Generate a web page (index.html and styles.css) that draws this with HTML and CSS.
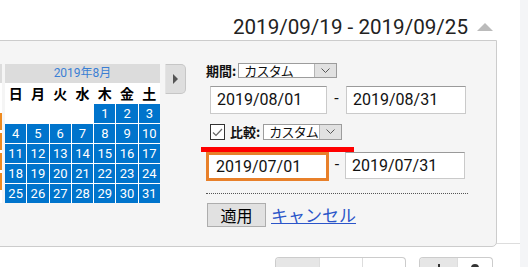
FILE: index.html
```html
<!DOCTYPE html>
<html lang="ja">
<head>
  <meta charset="UTF-8">
  <title>期間の選択</title>
  <link rel="stylesheet" href="styles.css">
</head>
<body>
  <div class="page">
    <div class="main">
      <div class="range-title">
        <span>2019/09/19 - 2019/09/25</span>
        <span class="caret-up"></span>
      </div>
      <div class="content"></div>

      <div class="toolbar">
        <div class="seg-group">
          <span class="seg active wide"></span>
          <span class="seg wide"></span>
          <span class="seg wide"></span>
        </div>
        <div class="seg-group">
          <span class="seg active icon-seg">
            <svg width="14" height="14" viewBox="0 0 14 14"><path d="M7 1v8M3.5 6L7 9.5 10.5 6M2 12h10" fill="none" stroke="#333" stroke-width="2"/></svg>
          </span>
          <span class="seg icon-seg narrow">
            <svg width="14" height="14" viewBox="0 0 14 14"><circle cx="7" cy="5" r="4" fill="#333"/></svg>
          </span>
        </div>
      </div>

      <div class="picker">
        <div class="cal-clip">
          <div class="cal" id="cal-prev"></div>
        </div>
        <div class="cal" id="cal-current"></div>
        <button class="next-month" aria-label="次の月"></button>

        <div class="form">
          <div class="row period">
            <span class="label">期間:</span>
            <div class="combo combo-period">
              <span class="combo-text">カスタム</span>
              <span class="combo-arrow"><svg width="9" height="5" viewBox="0 0 9 5"><path d="M0.5 0.5l4 4 4-4" fill="none" stroke="#555"/></svg></span>
            </div>
          </div>

          <div class="row dates">
            <div class="date first">2019/08/01</div>
            <span class="dash">-</span>
            <div class="date">2019/08/31</div>
          </div>

          <div class="row compare">
            <span class="checkbox"><svg width="13" height="14" viewBox="0 0 13 14"><path d="M2 7.5l3 3 6-6.5" fill="none" stroke="#666" stroke-width="1.2"/></svg></span>
            <span class="label">比較:</span>
            <div class="combo combo-compare">
              <span class="combo-text">カスタム</span>
              <span class="combo-arrow"><svg width="9" height="5" viewBox="0 0 9 5"><path d="M0.5 0.5l4 4 4-4" fill="none" stroke="#555"/></svg></span>
            </div>
          </div>

          <div class="mark-line"></div>

          <div class="row dates compare-dates">
            <div class="date highlight">2019/07/01</div>
            <span class="dash">-</span>
            <div class="date">2019/07/31</div>
          </div>

          <div class="separator"></div>

          <div class="row actions">
            <button class="apply">適用</button>
            <a href="#" class="cancel">キャンセル</a>
          </div>
        </div>
      </div>
    </div>
    <div class="side"></div>
  </div>

  <script>
    const dayNames = ['日', '月', '火', '水', '木', '金', '土'];

    function buildMonth(el, year, month, dayClass) {
      const head = document.createElement('div');
      head.className = 'cal-head';
      head.textContent = year + '年' + month + '月';
      el.appendChild(head);

      const grid = document.createElement('div');
      grid.className = 'cal-grid';

      dayNames.forEach(name => {
        const cell = document.createElement('span');
        cell.className = 'dow';
        cell.textContent = name;
        grid.appendChild(cell);
      });

      const first = new Date(year, month - 1, 1).getDay();
      const days = new Date(year, month, 0).getDate();

      for (let i = 0; i < first; i++) {
        grid.appendChild(document.createElement('span'));
      }
      for (let d = 1; d <= days; d++) {
        const cell = document.createElement('span');
        cell.className = 'day ' + dayClass;
        cell.textContent = d;
        grid.appendChild(cell);
      }
      while (grid.children.length < 42) {
        grid.appendChild(document.createElement('span'));
      }

      el.appendChild(grid);
    }

    buildMonth(document.getElementById('cal-prev'), 2019, 7, 'compare');
    buildMonth(document.getElementById('cal-current'), 2019, 8, 'selected');
  </script>
</body>
</html>
```

FILE: styles.css
```css
body {
  margin: 0;
  background-color: #fff;
  overflow: hidden;
  font-family: Roboto, "Noto Sans CJK JP", sans-serif;
  color: #111;
}

.page {
  display: flex;
  height: 267px;
  overflow: hidden;
}

.main {
  width: 520px;
  position: relative;
}

.side {
  flex: 1;
  background-color: #f4f5f7;
}

.range-title {
  height: 40px;
  box-sizing: border-box;
  padding: 15px 27px 0 0;
  display: flex;
  justify-content: flex-end;
  align-items: flex-start;
  font-size: 20.6px;
  line-height: 25px;
  color: #222;
}

.caret-up {
  margin: 8px 0 0 9px;
  border-left: 8px solid transparent;
  border-right: 8px solid transparent;
  border-bottom: 8px solid #bbb;
}

.content {
  height: 203px;
  border-bottom: 1px solid #ddd;
}

/* toolbar under the panel, only its top shows */
.toolbar {
  display: flex;
  justify-content: flex-end;
  gap: 13px;
  padding-right: 27px;
  margin-top: 13px;
}

.seg-group {
  display: flex;
  height: 10px;
  border: 1px solid #ccc;
  border-bottom: none;
  border-radius: 4px 4px 0 0;
  overflow: hidden;
  background-color: #fff;
}

.seg {
  display: flex;
  justify-content: center;
  padding-top: 5px;
  box-sizing: border-box;
  border-left: 1px solid #ddd;
}

.seg:first-child {
  border-left: none;
}

.seg.wide {
  width: 43px;
}

.seg.icon-seg {
  width: 37px;
}

.seg.narrow {
  width: 35px;
}

.seg.active {
  background-color: #e6e6e6;
}

/* date range dropdown */
.picker {
  position: absolute;
  top: 40px;
  left: -10px;
  right: 23px;
  height: 207px;
  box-sizing: border-box;
  background-color: #f5f5f5;
  border: 1px solid #ccc;
  border-radius: 0 0 5px 0;
  padding: 23px 0 0 9px;
  display: flex;
  align-items: flex-start;
}

.cal-clip {
  width: 2px;
  overflow: hidden;
  display: flex;
  justify-content: flex-end;
  margin-right: 3px;
}

.cal {
  width: 155px;
  flex-shrink: 0;
  background-color: #fff;
}

.cal-head {
  height: 19px;
  line-height: 19px;
  margin-bottom: 1px;
  background-color: #dcdcdc;
  color: #3b7fd4;
  text-align: center;
  font-size: 12px;
}

.cal-grid {
  display: grid;
  grid-template-columns: repeat(7, 1fr);
  grid-auto-rows: 19px;
  gap: 1px;
}

.cal-grid span {
  text-align: center;
  line-height: 19px;
  font-size: 13px;
}

.cal-grid .dow {
  font-family: "Noto Sans CJK JP", sans-serif;
  font-weight: bold;
  font-size: 14px;
  color: #000;
}

.day.selected {
  background-color: #0074cc;
  color: #fff;
}

.day.compare {
  background-color: #ef8a1f;
  color: #fff;
}

.next-month {
  width: 21px;
  height: 30px;
  margin-left: 5px;
  padding: 0;
  flex-shrink: 0;
  border: 1px solid #c6c6c6;
  border-left-color: #e4e4e4;
  border-radius: 0 5px 5px 0;
  background-color: #dedede;
  display: flex;
  align-items: center;
  justify-content: center;
}

.next-month::before {
  content: "";
  border-left: 5px solid #555;
  border-top: 5px solid transparent;
  border-bottom: 5px solid transparent;
}

.form {
  margin: -1px 0 0 20px;
  width: 262px;
  font-family: "Noto Sans CJK JP", sans-serif;
}

.row {
  display: flex;
  align-items: center;
}

.label {
  font-weight: bold;
  font-size: 13px;
  line-height: 15px;
  color: #111;
  white-space: nowrap;
}

.combo {
  display: flex;
  box-sizing: border-box;
  border: 1px solid #9c9c9c;
  background-color: #fff;
  font-size: 13px;
  letter-spacing: -0.8px;
  white-space: nowrap;
}

.combo-period {
  width: 99px;
  height: 15px;
  margin-left: 2px;
}

.combo-compare {
  width: 79px;
  height: 16px;
  margin-left: 3px;
}

.combo-text {
  flex: 1;
  padding-left: 5px;
  line-height: 13px;
}

.combo-compare .combo-text {
  line-height: 14px;
}

.combo-arrow {
  width: 21px;
  flex-shrink: 0;
  background-color: #e1e1e1;
  border-left: 1px solid #b5b5b5;
  display: flex;
  align-items: center;
  justify-content: center;
}

.dates {
  margin-top: 8px;
  align-items: flex-start;
}

.date {
  box-sizing: border-box;
  width: 120px;
  height: 28px;
  border: 1px solid #cacaca;
  border-top-color: #9a9a9a;
  background-color: #fff;
  padding-left: 6px;
  font-family: Roboto, sans-serif;
  font-size: 16px;
  line-height: 26px;
  color: #111;
}

.date.first {
  width: 117px;
  margin-left: 4px;
}

.dash {
  width: 19px;
  text-align: center;
  font-family: Roboto, sans-serif;
  font-size: 16px;
  line-height: 26px;
}

.compare {
  margin-top: 9px;
  height: 17px;
}

.checkbox {
  box-sizing: border-box;
  width: 15px;
  height: 16px;
  margin: 0 5px 0 4px;
  border: 1px solid #333;
  background-color: #fff;
  display: flex;
}

.mark-line {
  margin: 7px 0 0 -5px;
  width: 153px;
  height: 5px;
  background-color: #ff0000;
}

.compare-dates {
  margin-top: 0;
}

.compare-dates .date {
  height: 27px;
  line-height: 25px;
}

.compare-dates .dash {
  width: 16px;
}

.date.highlight {
  width: 123px;
  height: 29px;
  border: 3px solid #e8802a;
  padding-left: 7px;
  line-height: 23px;
}

.separator {
  margin-top: 12px;
  width: 262px;
  border-top: 1px dotted #555;
}

.actions {
  margin-top: 9px;
}

.apply {
  width: 59px;
  height: 24px;
  margin-left: 1px;
  padding: 0;
  border: 1px solid #adadad;
  background-color: #e1e1e1;
  font-family: "Noto Sans CJK JP", sans-serif;
  font-size: 16px;
  line-height: 20px;
  color: #000;
}

.cancel {
  margin-left: 5px;
  font-size: 17px;
  line-height: 22px;
  color: #2b55c9;
}
```
